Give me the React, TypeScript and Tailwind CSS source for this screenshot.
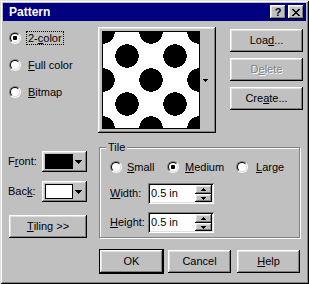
import React from "react";

const raised =
  "shadow-[inset_-1px_-1px_#000,inset_1px_1px_#fff,inset_-2px_-2px_#808080,inset_2px_2px_#dfdfdf]";
const sunken =
  "shadow-[inset_1px_1px_#808080,inset_-1px_-1px_#fff,inset_2px_2px_#000,inset_-2px_-2px_#dfdfdf]";

function Down({ w = 7 }: { w?: number }) {
  const d =
    w === 7
      ? "M0 0h7v1h-1v1h-1v1h-1v1h-1v-1h-1v-1h-1v-1h-1z"
      : "M0 0h5v1h-1v1h-1v1h-1v-1h-1v-1h-1z";
  return (
    <svg width={w} height={w === 7 ? 4 : 3} shapeRendering="crispEdges">
      <path d={d} fill="#000" />
    </svg>
  );
}

function Up() {
  return (
    <svg width={5} height={3} shapeRendering="crispEdges">
      <path d="M2 0h1v1h1v1h1v1h-5v-1h1v-1h1z" fill="#000" />
    </svg>
  );
}

function Radio({ checked }: { checked?: boolean }) {
  return (
    <span className="relative inline-block w-[12px] h-[12px] shrink-0 rounded-full border border-t-[#808080] border-l-[#808080] border-b-white border-r-white">
      <span className="absolute inset-0 rounded-full border border-t-black border-l-black border-b-[#dfdfdf] border-r-[#dfdfdf] bg-white flex items-center justify-center">
        {checked && <span className="w-[4px] h-[4px] bg-black rounded-[1px]" />}
      </span>
    </span>
  );
}

function Btn({
  children,
  className = "",
  disabled,
}: {
  children: React.ReactNode;
  className?: string;
  disabled?: boolean;
}) {
  return (
    <div
      className={`${raised} bg-[#c0c0c0] flex items-center justify-center h-[23px] ${
        disabled ? "text-[#808080] [text-shadow:1px_1px_0_#fff]" : "text-black"
      } ${className}`}
    >
      {children}
    </div>
  );
}

function Pattern() {
  const p = 48.5;
  const pts: [number, number][] = [];
  for (let i = 0; i <= 2; i++)
    for (let j = 0; j <= 2; j++) pts.push([i * p, j * p]);
  for (let i = 0; i < 2; i++)
    for (let j = 0; j < 2; j++) pts.push([i * p + p / 2, j * p + p / 2]);
  return (
    <svg width={96} height={96} viewBox="0 0 97 97" shapeRendering="crispEdges" className="block">
      <rect width={97} height={97} fill="#fff" />
      {pts.map(([x, y], k) => (
        <circle key={k} cx={x} cy={y} r={11.8} fill="#000" />
      ))}
    </svg>
  );
}

function CloseGlyph() {
  const rows = [
    [[0, 2], [6, 2]],
    [[1, 2], [5, 2]],
    [[2, 4]],
    [[3, 2]],
    [[2, 4]],
    [[1, 2], [5, 2]],
    [[0, 2], [6, 2]],
  ];
  return (
    <svg width={8} height={7} shapeRendering="crispEdges">
      {rows.map((r, y) =>
        r.map(([x, w], k) => <rect key={`${y}-${k}`} x={x} y={y} width={w} height={1} fill="#000" />)
      )}
    </svg>
  );
}

function Spin({ value }: { value: string }) {
  return (
    <div className={`${sunken} bg-white w-[66px] h-[21px] flex items-center p-[2px]`}>
      <span className="flex-1 pl-[1px] leading-none">{value}</span>
      <div className="flex flex-col w-[17px] h-[17px]">
        <div className={`${raised} bg-[#c0c0c0] h-[9px] flex items-center justify-center`}>
          <Up />
        </div>
        <div className={`${raised} bg-[#c0c0c0] h-[8px] flex items-center justify-center`}>
          <Down w={5} />
        </div>
      </div>
    </div>
  );
}

function ColorBtn({ color }: { color: string }) {
  return (
    <div className={`${raised} bg-[#c0c0c0] w-[45px] h-[21px] flex items-center pl-[3px] pr-[5px]`}>
      <div className="w-[28px] h-[15px] border border-black" style={{ background: color }} />
      <div className="ml-auto flex items-center">
        <Down />
      </div>
    </div>
  );
}

export default function App() {
  return (
    <div
      className="w-[309px] h-[284px] bg-[#c0c0c0] p-[3px] text-[11px] text-black shadow-[inset_1px_1px_#dfdfdf,inset_-1px_-1px_#000,inset_2px_2px_#fff,inset_-2px_-2px_#808080]"
      style={{ fontFamily: '"Liberation Sans", Arial, sans-serif' }}
    >
      {/* Title bar */}
      <div className="h-[18px] bg-[#000080] flex items-center pl-[6px] pr-[2px]">
        <span className="text-white font-bold text-[12px] leading-none">Pattern</span>
        <div className="ml-auto flex gap-[2px]">
          <div className={`${raised} bg-[#c0c0c0] w-[16px] h-[14px] flex items-center justify-center font-bold text-[11px] leading-none`}>
            ?
          </div>
          <div className={`${raised} bg-[#c0c0c0] w-[16px] h-[14px] flex items-center justify-center`}>
            <CloseGlyph />
          </div>
        </div>
      </div>

      <div className="pl-[5px]">
        {/* Row 1 */}
        <div className="flex mt-[6px] h-[106px]">
          <div className="w-[90px] flex flex-col pt-[4px] gap-[13px]">
            <div className="flex items-center h-[14px] pl-[1px]">
              <Radio checked />
              <span className="ml-[5px] border border-dotted border-black px-[1px] leading-[12px]">
                2-<u>c</u>olor
              </span>
            </div>
            <div className="flex items-center h-[14px] pl-[1px]">
              <Radio />
              <span className="ml-[7px] leading-[12px]">
                <u>F</u>ull color
              </span>
            </div>
            <div className="flex items-center h-[14px] pl-[1px]">
              <Radio />
              <span className="ml-[7px] leading-[12px]">
                <u>B</u>itmap
              </span>
            </div>
          </div>

          <div className={`${raised} bg-[#c0c0c0] w-[118px] h-[106px] flex p-[4px]`}>
            <div className="w-[98px] h-[98px] border border-black">
              <Pattern />
            </div>
            <div className="flex-1 flex items-center justify-center pr-[2px]">
              <Down w={5} />
            </div>
          </div>

          <div className="ml-[14px] w-[73px] flex flex-col pt-[2px] gap-[6px]">
            <Btn>
              Loa<u>d</u>...
            </Btn>
            <Btn disabled>
              D<u>e</u>lete
            </Btn>
            <Btn>
              Cre<u>a</u>te...
            </Btn>
          </div>
        </div>

        {/* Row 2 */}
        <div className="flex mt-[14px] h-[91px]">
          <div className="w-[91px] flex flex-col pt-[4px]">
            <div className="flex items-center h-[21px]">
              <span className="w-[34px]">
                F<u>r</u>ont:
              </span>
              <ColorBtn color="#000" />
            </div>
            <div className="flex items-center h-[21px] mt-[9px]">
              <span className="w-[34px]">
                Bac<u>k</u>:
              </span>
              <ColorBtn color="#fff" />
            </div>
            <Btn className="mt-[13px] ml-[1px] w-[78px]">
              <u>T</u>iling &gt;&gt;
            </Btn>
          </div>

          <div className="relative w-[201px] h-[91px] border border-[#808080] shadow-[inset_1px_1px_#fff,1px_1px_#fff]">
            <span className="absolute -top-[8px] left-[6px] px-[2px] bg-[#c0c0c0] leading-[14px]">Tile</span>
            <div className="pl-[10px] pt-[12px]">
              <div className="flex items-center h-[14px]">
                <div className="w-[57px] flex items-center">
                  <Radio />
                  <span className="ml-[5px]">
                    <u>S</u>mall
                  </span>
                </div>
                <div className="w-[69px] flex items-center">
                  <Radio checked />
                  <span className="ml-[6px]">
                    <u>M</u>edium
                  </span>
                </div>
                <div className="flex items-center">
                  <Radio />
                  <span className="ml-[8px]">
                    <u>L</u>arge
                  </span>
                </div>
              </div>
              <div className="flex items-center mt-[9px]">
                <span className="w-[38px]">
                  <u>W</u>idth:
                </span>
                <Spin value="0.5 in" />
              </div>
              <div className="flex items-center mt-[8px]">
                <span className="w-[38px]">
                  <u>H</u>eight:
                </span>
                <Spin value="0.5 in" />
              </div>
            </div>
          </div>
        </div>

        {/* Row 3 */}
        <div className="flex items-center mt-[11px] ml-[91px]">
          <div className="border border-black w-[65px] h-[25px]">
            <Btn className="w-full">OK</Btn>
          </div>
          <Btn className="ml-[4px] w-[63px]">Cancel</Btn>
          <Btn className="ml-[6px] w-[63px]">
            <u>H</u>elp
          </Btn>
        </div>
      </div>
    </div>
  );
}
